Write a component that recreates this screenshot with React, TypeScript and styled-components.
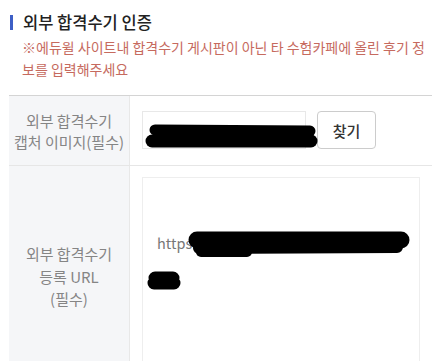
import React from 'react';
import styled, { createGlobalStyle } from 'styled-components';

const GlobalStyle = createGlobalStyle`
  body {
    margin: 0;
    background: #ffffff;
    font-family: 'Noto Sans CJK KR', 'Noto Sans', sans-serif;
  }
`;

type TRedact = {
  width: number;
  height: number;
  strokes: { d: string; w: number }[];
  left: number;
  top: number;
};
const Redact: React.FC<TRedact> = ({ width, height, strokes, left, top }) => {
  return (
    <Scribble width={width} height={height} viewBox={`0 0 ${width} ${height}`} $left={left} $top={top}>
      {strokes.map((s, i) => (
        <path key={i} d={s.d} stroke="#000" strokeWidth={s.w} strokeLinecap="round" strokeLinejoin="round" fill="none" />
      ))}
    </Scribble>
  );
};

const App: React.FC = () => {
  return (
    <Page>
      <GlobalStyle />
      <Header>
        <Bar />
        <Title>외부 합격수기 인증</Title>
      </Header>
      <Notice>※에듀윌 사이트내 합격수기 게시판이 아닌 타 수험카페에 올린 후기 정보를 입력해주세요</Notice>
      <Table>
        <Row>
          <Label>
            외부 합격수기
            <br />
            캡처 이미지(필수)
          </Label>
          <Cell $pad="15px 0 15px 12px">
            <FileField>
              <Redact
                width={172}
                height={30}
                left={2}
                top={9}
                strokes={[
                  { d: 'M10 9 L165 10', w: 11 },
                  { d: 'M7 20 L166 20', w: 13 },
                ]}
              />
            </FileField>
            <FindButton>찾기</FindButton>
          </Cell>
        </Row>
        <Row>
          <Label $tall>
            외부 합격수기
            <br />
            등록 URL
            <br />
            (필수)
          </Label>
          <Cell $pad="11px 0 0 12px">
            <UrlBox>
              https://
              <Redact
                width={224}
                height={60}
                left={44}
                top={52}
                strokes={[
                  { d: 'M10 10 L214 10', w: 17 },
                  { d: 'M12 18 L210 17', w: 12 },
                  { d: 'M14 22 L60 22', w: 10 },
                ]}
              />
              <Redact
                width={44}
                height={28}
                left={0}
                top={88}
                strokes={[{ d: 'M12 12 L30 12 M11 17 L31 17', w: 13 }]}
              />
            </UrlBox>
          </Cell>
        </Row>
      </Table>
    </Page>
  );
};

const Page = styled.div`
  width: 444px;
  height: 361px;
  overflow: hidden;
  padding: 10px 12px 0 9px;
  box-sizing: border-box;
`;

const Header = styled.div`
  display: flex;
  align-items: center;
  height: 24px;
`;

const Bar = styled.span`
  width: 3px;
  height: 15px;
  background-color: #3d5fc6;
  margin-left: 1px;
`;

const Title = styled.h2`
  margin: 0 0 0 10px;
  font-size: 16.5px;
  font-weight: 500;
  color: #222222;
  line-height: 24px;
`;

const Notice = styled.p`
  margin: 2px 0 0 13px;
  font-size: 14px;
  line-height: 22px;
  color: #c66a5e;
`;

const Table = styled.div`
  margin-top: 15px;
  border-top: 1px solid #d4d4d4;
`;

const Row = styled.div`
  display: grid;
  grid-template-columns: 121px 1fr;
  border-bottom: 1px solid #e6e6e6;
`;

const Label = styled.div<{ $tall?: boolean }>`
  background-color: #f5f6f8;
  border-right: 1px solid #e8e8e8;
  display: flex;
  align-items: flex-start;
  justify-content: center;
  text-align: center;
  font-size: 15px;
  line-height: ${({ $tall }) => ($tall ? '22.5px' : '21px')};
  color: #858585;
  min-height: ${({ $tall }) => ($tall ? '220px' : '69px')};
  padding-top: ${({ $tall }) => ($tall ? '77px' : '14px')};
  box-sizing: border-box;
  white-space: nowrap;
`;

const Cell = styled.div<{ $pad: string }>`
  display: flex;
  align-items: flex-start;
  gap: 11px;
  padding: ${({ $pad }) => $pad};
`;

const FileField = styled.div`
  position: relative;
  width: 164px;
  height: 38px;
  border: 1px solid #e8e8e8;
  box-sizing: border-box;
  background: #ffffff;
`;

const FindButton = styled.button`
  width: 59px;
  height: 38px;
  border: 1px solid #cccccc;
  border-radius: 4px;
  background: #ffffff;
  font-family: inherit;
  font-size: 15px;
  font-weight: 500;
  color: #333333;
  padding: 0;
`;

const UrlBox = styled.div`
  position: relative;
  width: 278px;
  height: 220px;
  border: 1px solid #eeeeee;
  box-sizing: border-box;
  padding: 53px 0 0 14px;
  font-size: 14.5px;
  line-height: 24px;
  color: #777777;
`;

const Scribble = styled.svg<{ $left: number; $top: number }>`
  position: absolute;
  left: ${({ $left }) => $left}px;
  top: ${({ $top }) => $top}px;
  overflow: visible;
`;

export default App;
